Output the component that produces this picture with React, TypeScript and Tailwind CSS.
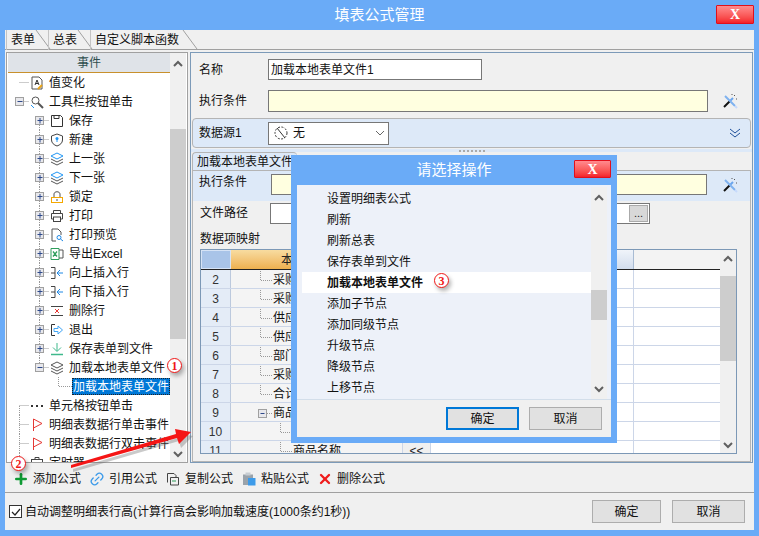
import type { ReactNode } from 'react';
import { Link2, Plus, X } from 'lucide-react';

const FONT = "font-['Liberation_Sans','Noto_Sans_CJK_SC',sans-serif]";

// ---- small drawn icons ----
const Svg = ({ children }: { children: ReactNode }) => (
  <svg width="14" height="14" viewBox="0 0 14 14" fill="none" className="shrink-0">
    {children}
  </svg>
);

const Layers = ({ top = '#2196f3' }: { top?: string }) => (
  <Svg>
    <path d="M7 1 13 4 7 7 1 4Z" stroke={top} />
    <path d="M1 7 7 10 13 7" stroke="#555" />
    <path d="M1 10 7 13 13 10" stroke="#555" />
  </Svg>
);

const InsertRow = () => (
  <Svg>
    <path d="M1 1.5H5V12.5H1M1 7H5" stroke="#444" />
    <path d="M13 7H7M10 4 7 7 10 10" stroke="#1e88e5" />
  </Svg>
);

const Flag = () => (
  <Svg>
    <path d="M3.5 13V1L12 5.5 3.5 10" stroke="#e53935" />
  </Svg>
);

const icons: Record<string, ReactNode> = {
  value: (
    <Svg>
      <path d="M2 1H9L12 4V13H2Z" stroke="#555" />
      <path d="M5 9 7 4 9 9M5.7 7.5H8.3" stroke="#333" />
      <path d="M8 13 12 9" stroke="#e8a317" strokeWidth="2" />
    </Svg>
  ),
  search: (
    <Svg>
      <circle cx="5.5" cy="5.5" r="3.5" stroke="#555" />
      <path d="M8 8 13 13" stroke="#555" strokeWidth="2" />
      <path d="M1 10 4 13" stroke="#2196f3" />
    </Svg>
  ),
  save: (
    <Svg>
      <path d="M1.5 1.5H10.5L12.5 3.5V12.5H1.5Z" stroke="#333" />
      <path d="M4 1.5V4.5H9V1.5" stroke="#333" />
    </Svg>
  ),
  shield: (
    <Svg>
      <path d="M7 1 12.5 3V7C12.5 10 10 12 7 13 4 12 1.5 10 1.5 7V3Z" stroke="#444" />
      <circle cx="7" cy="5.5" r="1.5" fill="#2196f3" />
      <path d="M7 6V9" stroke="#2196f3" />
    </Svg>
  ),
  layers: <Layers />,
  lock: (
    <Svg>
      <path d="M4 7V4C4 1 10 1 10 4V7" stroke="#555" />
      <rect x="1.5" y="7.5" width="11" height="5" stroke="#f5a800" />
      <path d="M6 10H8" stroke="#555" />
    </Svg>
  ),
  print: (
    <Svg>
      <path d="M3.5 4V1.5H10.5V4M3.5 10H1.5V4.5H12.5V10H10.5" stroke="#444" />
      <rect x="3.5" y="8" width="7" height="4.5" stroke="#444" />
    </Svg>
  ),
  preview: (
    <Svg>
      <path d="M2 1H8L11 4V7M2 1V13H6" stroke="#555" />
      <circle cx="9" cy="9.5" r="2" stroke="#1e88e5" />
      <path d="M10.5 11 13 13" stroke="#1e88e5" />
    </Svg>
  ),
  excel: (
    <Svg>
      <path d="M1 1.5H9V12.5H1Z" stroke="#2e9e5b" />
      <path d="M3 4.5 7 9.5M7 4.5 3 9.5" stroke="#2e9e5b" strokeWidth="1.3" />
      <path d="M9 3H13V11H9" stroke="#555" />
    </Svg>
  ),
  insert: <InsertRow />,
  remove: (
    <Svg>
      <path d="M1 2.5H13M1 11.5H13" stroke="#444" />
      <path d="M5 5 9 9M9 5 5 9" stroke="#e53935" />
    </Svg>
  ),
  exit: (
    <Svg>
      <path d="M5 1.5H1.5V12.5H5" stroke="#333" />
      <path d="M4 5.5H8V3L12.5 7 8 11V8.5H4Z" stroke="#42a5f5" />
    </Svg>
  ),
  download: (
    <Svg>
      <path d="M7 1V9M3 5.5 7 9.5 11 5.5" stroke="#3fb98c" />
      <path d="M1 12.5H13" stroke="#3fb98c" strokeWidth="1.5" />
    </Svg>
  ),
  layersGray: <Layers top="#555" />,
  dots: (
    <Svg>
      <path d="M1 7H3M6 7H8M11 7H13" stroke="#333" strokeWidth="2" />
    </Svg>
  ),
  flag: <Flag />,
  timer: (
    <Svg>
      <rect x="1.5" y="3.5" width="11" height="9.5" stroke="#444" />
      <path d="M5 3.5V1.5H9V3.5" stroke="#444" />
    </Svg>
  ),
};

const Wand = () => (
  <svg width="16" height="16" viewBox="0 0 16 16" fill="none" className="shrink-0">
    <path d="M2 14 8 8" stroke="#111" strokeWidth="2" />
    <path d="M8 8 11 5" stroke="#6aa5ee" strokeWidth="2" />
    <path d="M3 3 13 13" stroke="#7fb2ef" strokeWidth="2" />
    <path d="M12 2 13 3M14 6 15 6M10 1V2" stroke="#555" />
    <path d="M13 13 15 15" stroke="#c6dafc" strokeWidth="2" />
  </svg>
);

const Chevron = ({ up = false }: { up?: boolean }) => (
  <svg width="10" height="7" viewBox="0 0 10 7" fill="none">
    <path d={up ? 'M1 6 5 2 9 6' : 'M1 1 5 5 9 1'} stroke="#606060" strokeWidth="2" />
  </svg>
);

// ---- tree ----
type Node = {
  label: string;
  icon: string;
  level: 0 | 1;
  box?: 'plus' | 'minus';
  down?: boolean;
  up?: boolean;
};

const treeRows: Node[] = [
  { label: '值变化', icon: 'value', level: 0, down: false },
  { label: '工具栏按钮单击', icon: 'search', level: 0, box: 'minus' },
  { label: '保存', icon: 'save', level: 1, box: 'plus', down: true },
  { label: '新建', icon: 'shield', level: 1, box: 'plus', up: true, down: true },
  { label: '上一张', icon: 'layers', level: 1, box: 'plus', up: true, down: true },
  { label: '下一张', icon: 'layers', level: 1, box: 'plus', up: true, down: true },
  { label: '锁定', icon: 'lock', level: 1, box: 'plus', up: true, down: true },
  { label: '打印', icon: 'print', level: 1, box: 'plus', up: true, down: true },
  { label: '打印预览', icon: 'preview', level: 1, box: 'plus', up: true, down: true },
  { label: '导出Excel', icon: 'excel', level: 1, box: 'plus', up: true, down: true },
  { label: '向上插入行', icon: 'insert', level: 1, box: 'plus', up: true, down: true },
  { label: '向下插入行', icon: 'insert', level: 1, box: 'plus', up: true, down: true },
  { label: '删除行', icon: 'remove', level: 1, box: 'plus', up: true, down: true },
  { label: '退出', icon: 'exit', level: 1, box: 'plus', up: true, down: true },
  { label: '保存表单到文件', icon: 'download', level: 1, box: 'plus', up: true, down: true },
  { label: '加载本地表单文件', icon: 'layersGray', level: 1, box: 'minus', up: true },
];

const bottomRows: Node[] = [
  { label: '单元格按钮单击', icon: 'dots', level: 0, down: true },
  { label: '明细表数据行单击事件', icon: 'flag', level: 0, up: true, down: true },
  { label: '明细表数据行双击事件', icon: 'flag', level: 0, up: true, down: true },
  { label: '定时器', icon: 'timer', level: 0, box: 'plus', up: true },
];

const Connector = ({ node }: { node: Node }) => {
  const cx = node.level === 0 ? 11.5 : 31.5;
  const width = node.level === 0 ? 22 : 42;
  return (
    <svg width={width} height="19" viewBox={`0 0 ${width} 19`} fill="none" className="shrink-0">
      <g stroke="#999" strokeDasharray="1 1">
        {node.up && <path d={`M${cx} 0V9`} />}
        {node.down && <path d={`M${cx} 10V19`} />}
        <path d={`M${cx} 9.5H${width - 1}`} />
      </g>
      {node.box && (
        <g>
          <rect x={cx - 4} y="5.5" width="8" height="8" fill="#e8e8ec" stroke="#a0a0a0" />
          <path d={`M${cx - 2} 9.5H${cx + 3}`} stroke="#2f4a8a" />
          {node.box === 'plus' && <path d={`M${cx + 0.5} 7V12.5`} stroke="#2f4a8a" />}
        </g>
      )}
    </svg>
  );
};

const TreeRow = ({ node }: { node: Node }) => (
  <div className="flex h-[19px] shrink-0 items-center">
    <Connector node={node} />
    {icons[node.icon]}
    <span className="ml-[5px] whitespace-nowrap text-[12px] text-[#111]">{node.label}</span>
  </div>
);

const Scroll = ({ thumbTop, thumbHeight, top = 'h-[20px]', bottom = 'h-[20px]' }: { thumbTop: string; thumbHeight: string; top?: string; bottom?: string }) => (
  <div className="flex w-[16px] shrink-0 flex-col bg-[#f0f0f0]">
    <div className={`flex shrink-0 items-center justify-center ${top}`}>
      <Chevron up />
    </div>
    <div className="min-h-0 flex-1">
      <div className={`bg-[#cdcdcd] ${thumbTop} ${thumbHeight}`} />
    </div>
    <div className={`flex shrink-0 items-center justify-center ${bottom}`}>
      <Chevron />
    </div>
  </div>
);

const TreePanel = () => (
  <div className="flex h-[411px] w-[182px] shrink-0 border border-[#a0a0a0] bg-white pl-px">
    <div className="flex w-[162px] shrink-0 flex-col overflow-hidden">
      <div className="flex h-[20px] shrink-0 items-center justify-center border-b border-[#c8902c] bg-[#dfe3e8] text-[12px] text-[#2f4f4f]">
        事件
      </div>
      {treeRows.map((n) => (
        <TreeRow key={n.label} node={n} />
      ))}
      <div className="flex h-[19px] shrink-0 items-center">
        <svg width="64" height="19" viewBox="0 0 64 19" fill="none" className="shrink-0">
          <path d="M50.5 0V9.5H64" stroke="#999" strokeDasharray="1 1" />
        </svg>
        <span className="flex h-[17px] flex-1 items-center whitespace-nowrap bg-[#0078d7] pl-px text-[12px] text-white outline-1 outline-dotted outline-[#222] -outline-offset-1">
          加载本地表单文件
        </span>
      </div>
      {bottomRows.map((n) => (
        <TreeRow key={n.label} node={n} />
      ))}
    </div>
    <Scroll thumbTop="mt-[56px]" thumbHeight="h-[210px]" bottom="h-[16px]" />
  </div>
);

// ---- right side ----
const Label = ({ children, className = '' }: { children: ReactNode; className?: string }) => (
  <span className={`shrink-0 text-[12px] text-[#111] ${className}`}>{children}</span>
);

const gridRows: { n: number; text: string; box?: boolean; deep?: boolean }[] = [
  { n: 2, text: '采购' },
  { n: 3, text: '采购' },
  { n: 4, text: '供应' },
  { n: 5, text: '供应' },
  { n: 6, text: '部门' },
  { n: 7, text: '采购' },
  { n: 8, text: '合计' },
  { n: 9, text: '商品', box: true },
  { n: 10, text: '', deep: true },
  { n: 11, text: '商品名称', deep: true },
];

const GridRow = ({ row }: { row: (typeof gridRows)[number] }) => (
  <div className="flex h-[19px] shrink-0 border-b border-[#ccd6e8] bg-white">
    <div className="flex w-[30px] shrink-0 items-center justify-center border-r border-[#bcc9dd] bg-[#e4ecf7] pt-px text-[12px] text-[#333]">
      {row.n}
    </div>
    <div className={`flex w-[172px] shrink-0 items-center border-r border-[#ccd6e8] bg-[#f4f4f4] pt-px text-[12px] text-[#111] ${row.deep ? 'pl-[43px]' : row.box ? 'pl-[27px]' : 'pl-[29px]'}`}>
      {row.box ? (
        <svg width="15" height="18" viewBox="0 0 15 18" fill="none" className="shrink-0">
          <rect x="0.5" y="5.5" width="8" height="8" fill="#e8e8ec" stroke="#a0a0a0" />
          <path d="M2.5 9.5H6.5" stroke="#2f4a8a" />
          <path d="M9 9.5H15" stroke="#999" strokeDasharray="1 1" />
        </svg>
      ) : (
        <svg width={row.deep ? 19 : 13} height="18" viewBox={row.deep ? '0 0 19 18' : '0 0 13 18'} fill="none" className="shrink-0">
          <path d={row.deep ? 'M6.5 0V9.5H19' : 'M0.5 0V9.5H13'} stroke="#999" strokeDasharray="1 1" />
        </svg>
      )}
      <span className="whitespace-nowrap">{row.text}</span>
    </div>
    <div className="flex w-[28px] shrink-0 items-center justify-center border-r border-[#ccd6e8] bg-[#f0f0f0] pt-px text-[12px] text-[#222]">
      {row.n === 11 ? '<<' : ''}
    </div>
    <div className="w-[203px] shrink-0 border-r border-[#ccd6e8]" />
  </div>
);

const MappingGrid = () => (
  <div className="ml-[7px] mt-[2px] flex h-[205px] w-[537px] border border-[#7c98b6] bg-[#f3f3f3]">
    <div className="flex w-[519px] shrink-0 flex-col overflow-hidden">
      <div className="flex h-[20px] shrink-0 border-b border-[#222]">
        <div className="w-[30px] shrink-0 border border-[#d6e3f5] bg-[#a9c4e8]" />
        <div className="flex w-[172px] shrink-0 items-center justify-center bg-gradient-to-b from-[#f8dca0] to-[#edb04e] text-[12px] text-[#222]">
          本表单数据项
        </div>
        <div className="w-[28px] shrink-0 bg-gradient-to-b from-[#f0f4fa] to-[#d2dded]" />
        <div className="w-[203px] shrink-0 border-r border-[#a8bbd3] bg-gradient-to-b from-[#f0f4fa] to-[#d2dded]" />
      </div>
      {gridRows.map((r) => (
        <GridRow key={r.n} row={r} />
      ))}
    </div>
    <Scroll thumbTop="mt-[10px]" thumbHeight="h-[85px]" top="h-[16px]" bottom="h-[16px]" />
  </div>
);

const RightPanel = () => (
  <div className="ml-[2px] mr-px flex h-[411px] flex-1 flex-col border border-[#7c9ab8] pt-[6px]">
    <div className="flex h-[21px] shrink-0 items-center pl-[8px]">
      <Label className="w-[69px]">名称</Label>
      <div className="flex h-[21px] w-[214px] items-center border border-[#777] bg-white pl-[2px] text-[12px] text-[#111]">
        加载本地表单文件1
      </div>
    </div>
    <div className="mt-[10px] flex h-[22px] shrink-0 items-center pl-[8px]">
      <Label className="w-[69px]">执行条件</Label>
      <div className="h-[22px] w-[440px] border border-[#777] bg-[#ffffe0]" />
      <div className="ml-[14px]">
        <Wand />
      </div>
    </div>
    <div className="ml-[1px] mt-[6px] flex h-[30px] w-[559px] shrink-0 items-center rounded-[4px] border border-[#b4b4b4] bg-[#dde9f8] pl-[6px]">
      <Label className="w-[69px]">数据源1</Label>
      <div className="flex h-[23px] w-[121px] items-center border border-[#777] bg-white pl-[5px] text-[12px] text-[#111]">
        <svg width="14" height="14" viewBox="0 0 14 14" fill="none" className="shrink-0">
          <circle cx="7" cy="7" r="6" stroke="#333" strokeDasharray="2 1.5" />
          <path d="M3 2 11 12" stroke="#333" />
        </svg>
        <span className="ml-[5px]">无</span>
        <svg width="10" height="6" viewBox="0 0 10 6" fill="none" className="ml-auto mr-[3px]">
          <path d="M1 1 5 5 9 1" stroke="#666" />
        </svg>
      </div>
      <svg width="12" height="11" viewBox="0 0 12 11" fill="none" className="ml-[340px]">
        <path d="M1 1 6 5 11 1M1 5 6 9 11 5" stroke="#1f4f9a" />
      </svg>
    </div>
    <div className="mt-[1px] flex h-[3px] shrink-0 items-center justify-center bg-[#dde9f8]">
      <div className="h-[2px] w-[26px] bg-[repeating-linear-gradient(90deg,#aaa_0,#aaa_2px,transparent_2px,transparent_4px)]" />
    </div>
    <div className="ml-[1px] flex h-[18px] shrink-0 items-center">
      <div className="flex h-[18px] items-center rounded-t-[4px] border-l border-t border-[#b4b4b4] bg-[#dde9f8] px-[4px] text-[12px] text-[#111]">
        加载本地表单文件
      </div>
    </div>
    <div className="ml-[1px] flex w-[559px] flex-1 flex-col border border-[#b4b4b4]">
      <div className="flex h-[30px] shrink-0 items-start bg-[#dde9f8] pl-[6px] pt-[3px]">
        <Label className="-mt-px w-[72px]">执行条件</Label>
        <div className="h-[21px] w-[436px] border border-[#777] bg-[#ffffe0]" />
        <div className="ml-[15px] mt-[3px]">
          <Wand />
        </div>
      </div>
      <div className="mt-[2px] flex h-[21px] shrink-0 items-center pl-[7px]">
        <Label className="mb-px w-[70px]">文件路径</Label>
        <div className="flex h-[21px] w-[380px] items-center justify-end border border-[#777] bg-white pr-px">
          <div className="flex h-[17px] w-[19px] items-center justify-center border border-[#aaa] bg-[#d8d8d8] text-[11px] leading-none text-[#222]">
            ...
          </div>
        </div>
      </div>
      <Label className="ml-[7px] mt-[6px] h-[17px]">数据项映射</Label>
      <MappingGrid />
    </div>
  </div>
);

// ---- overlays ----
const CloseButton = ({ className = '' }: { className?: string }) => (
  <div className={`flex h-[19px] w-[38px] items-center justify-center rounded-[1px] border border-[#e0101c] bg-gradient-to-b from-[#ff8a8e] to-[#f41d29] font-['Liberation_Serif',serif] text-[14px] font-bold text-white ${className}`}>
    X
  </div>
);

const Btn = ({ children, primary = false, w }: { children: ReactNode; primary?: boolean; w: string }) => (
  <div className={`flex h-[23px] ${w} items-center justify-center bg-[#e1e1e1] text-[12px] text-[#111] ${primary ? 'border-2 border-[#0078d7]' : 'border border-[#adadad]'}`}>
    {children}
  </div>
);

const Badge = ({ n, className }: { n: number; className: string }) => (
  <div className={`absolute flex h-[15px] w-[15px] items-center justify-center rounded-full border-[1.5px] border-[#f01818] bg-white font-['Liberation_Serif',serif] text-[12px] font-bold leading-none text-[#f01818] shadow-[2px_3px_4px_rgba(0,0,0,0.3)] ${className}`}>
    {n}
  </div>
);

const actions = ['设置明细表公式', '刷新', '刷新总表', '保存表单到文件', '加载本地表单文件', '添加子节点', '添加同级节点', '升级节点', '降级节点', '上移节点'];

const ActionDialog = () => (
  <div className="absolute left-[291px] top-[155px] flex h-[288px] w-[326px] flex-col bg-[#6aabf7] px-[6px] pb-[6px]">
    <div className="relative flex h-[30px] shrink-0 items-center justify-center text-[15px] text-white">
      请选择操作
      <CloseButton className="absolute right-0 top-[5px] !h-[18px] !w-[37px]" />
    </div>
    <div className="flex flex-1 flex-col bg-[#f0f0f0]">
      <div className="flex h-[215px] shrink-0 border-b border-[#d3deea] bg-[#edf1f9] pl-[5px] pt-[2px]">
        <div className="flex w-[289px] shrink-0 flex-col overflow-hidden pt-[1px]">
          {actions.map((a) => (
            <div
              key={a}
              className={`flex h-[21px] shrink-0 items-center pl-[25px] text-[12px] text-[#111] ${a === '加载本地表单文件' ? 'bg-white font-bold' : ''}`}
            >
              {a}
            </div>
          ))}
        </div>
        <Scroll thumbTop="mt-[83px]" thumbHeight="h-[30px]" />
      </div>
      <div className="flex flex-1 items-start gap-[10px] pl-[149px] pt-[7px]">
        <Btn primary w="w-[73px]">确定</Btn>
        <Btn w="w-[73px]">取消</Btn>
      </div>
    </div>
  </div>
);

const RedArrow = () => (
  <svg width="759" height="536" viewBox="0 0 759 536" fill="none" className="pointer-events-none absolute left-0 top-0">
    <path d="M71 468 177 437 179 444 191 432 175 429 176 434 71 465Z" fill="#666" opacity="0.35" transform="translate(2 4)" />
    <path d="M71 468 177 438 179 444 191 432 175 429 176 434 71 465Z" fill="#f51515" />
  </svg>
);

const tools: { label: string; icon: ReactNode }[] = [
  { label: '添加公式', icon: <Plus size={16} strokeWidth={4} color="#0e9a33" /> },
  { label: '引用公式', icon: <Link2 size={16} color="#3d9be9" className="-rotate-45" /> },
  {
    label: '复制公式',
    icon: (
      <Svg>
        <path d="M1.5 10.5V1.5H8L10 3.5V5" stroke="#444" />
        <path d="M4.5 5.5H12.5V13H4.5Z" stroke="#444" />
        <path d="M6 9H10" stroke="#2e9e5b" />
      </Svg>
    ),
  },
  {
    label: '粘贴公式',
    icon: (
      <Svg>
        <path d="M1 2.5H11V13H1Z" fill="#9aa3ab" />
        <rect x="3.5" y="0.5" width="5" height="3" fill="#c8cdd2" />
        <path d="M6 6H13.5V13.5H6Z" fill="#3d9be9" />
      </Svg>
    ),
  },
  { label: '删除公式', icon: <X size={16} strokeWidth={3.5} color="#ef1c1c" /> },
];

export default function App() {
  return (
    <div className={`relative flex h-[536px] w-[759px] flex-col overflow-hidden bg-[#6aabf7] ${FONT}`}>
      <div className="relative flex h-[30px] shrink-0 items-center justify-center text-[15px] text-white">
        填表公式管理
        <CloseButton className="absolute right-[5px] top-[5px]" />
      </div>

      <div className="mx-[5px] flex h-[500px] flex-col bg-[#f0f0f0]">
        {/* tabs */}
        <div className="flex h-[20px] shrink-0 border-b border-[#a0a0a0] pl-px">
          {[
            { t: '表单', w: 'w-[42px]' },
            { t: '总表', w: 'w-[42px]' },
            { t: '自定义脚本函数', w: 'w-[105px]' },
          ].map((tab) => (
            <div key={tab.t} className={`relative flex h-[20px] ${tab.w} items-center border-l border-[#c4c4c4] pl-[4px] text-[12px] text-[#111]`}>
              {tab.t}
              <svg width="16" height="20" viewBox="0 0 16 20" fill="none" className="absolute right-[-3px] top-0">
                <path d="M1 0 15 19" stroke="#a0a0a0" />
              </svg>
            </div>
          ))}
        </div>

        <div className="flex shrink-0 pl-px pt-[2px]">
          <TreePanel />
          <RightPanel />
        </div>

        <div className="flex h-[30px] shrink-0 items-center border-b border-[#a0a0a0] pl-[8px] pt-[3px]">
          {tools.map((tool) => (
            <div key={tool.label} className="mr-[8px] flex items-center gap-[4px] text-[12px] text-[#111]">
              <span className="flex w-[16px] justify-center">{tool.icon}</span>
              {tool.label}
            </div>
          ))}
        </div>

        <div className="flex flex-1 items-center pl-[4px] pr-[9px]">
          <div className="flex h-[13px] w-[13px] items-center justify-center border border-[#333] bg-white">
            <svg width="10" height="10" viewBox="0 0 10 10" fill="none">
              <path d="M1 5 4 8 9 2" stroke="#222" strokeWidth="1.2" />
            </svg>
          </div>
          <span className="ml-[3px] text-[12px] text-[#111]">自动调整明细表行高(计算行高会影响加载速度(1000条约1秒))</span>
          <div className="ml-auto flex gap-[11px]">
            <Btn w="w-[69px]">确定</Btn>
            <Btn w="w-[73px]">取消</Btn>
          </div>
        </div>
      </div>

      <ActionDialog />
      <RedArrow />
      <Badge n={1} className="left-[167px] top-[358px]" />
      <Badge n={2} className="left-[11px] top-[456px]" />
      <Badge n={3} className="left-[434px] top-[273px]" />
    </div>
  );
}
